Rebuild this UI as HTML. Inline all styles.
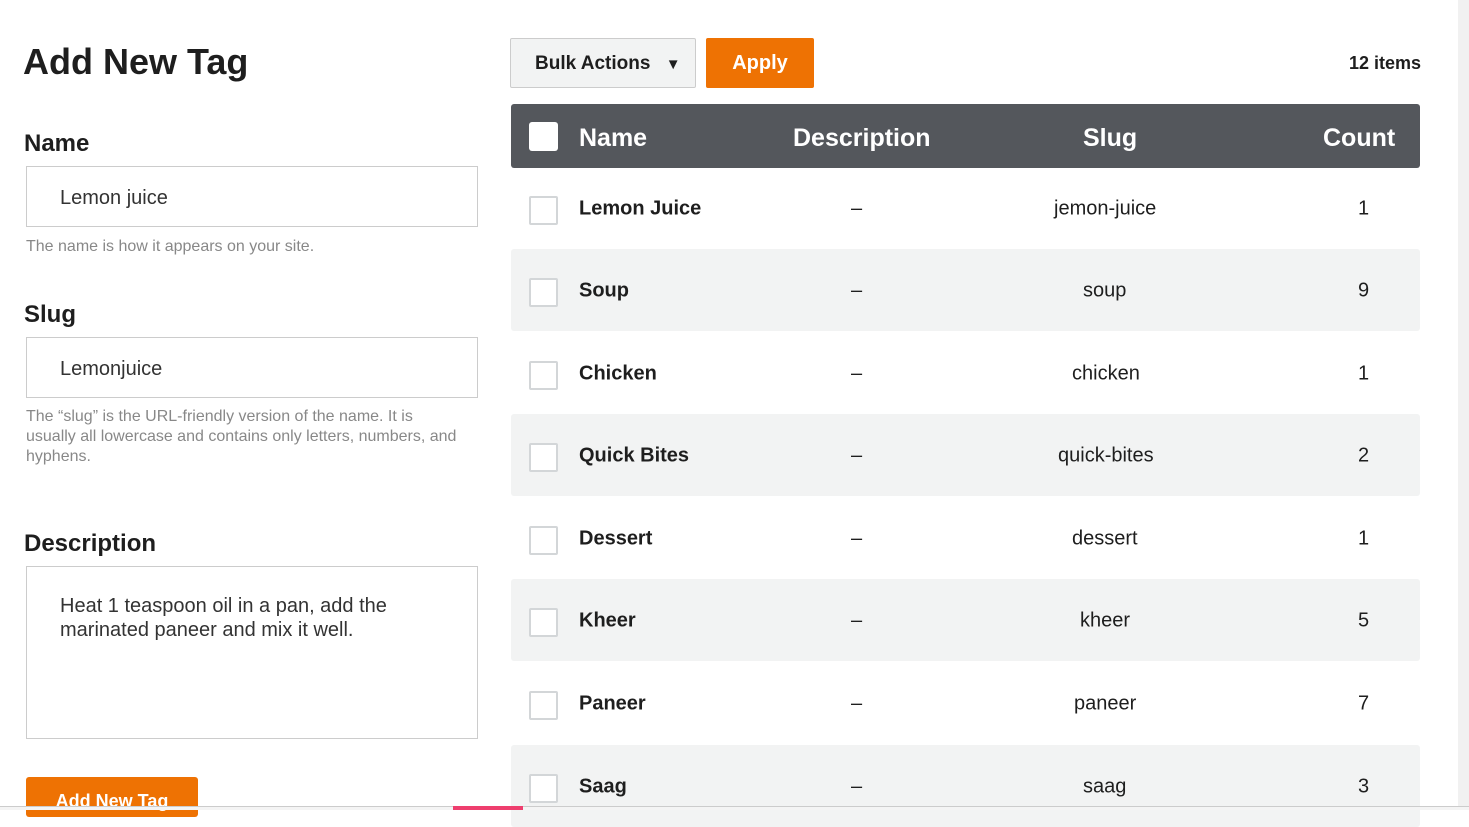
<!DOCTYPE html>
<html><head><style>
*{box-sizing:border-box;margin:0;padding:0}
body{width:1469px;height:810px;overflow:hidden;background:#fff;font-family:"Liberation Sans",Arial,sans-serif;color:#1e1e1e;position:relative}
.a{position:absolute}
h1{position:absolute;left:23px;top:41px;font-size:36px;font-weight:bold}
.lbl{position:absolute;left:24px;font-size:24px;font-weight:bold}
.inp{position:absolute;left:26px;width:452px;border:1px solid #ccc;background:#fff;font-size:20px;color:#333;padding:0 33px}
.help{position:absolute;left:26px;width:432px;font-size:16px;color:#888;line-height:20px}
.row{position:absolute;left:511px;width:909px;height:82px;font-size:20px}
.row.s{background:#f2f3f3;border-radius:3px}
.row span{position:absolute;top:50%;transform:translateY(-45%)}
.cb{position:absolute;left:18px;top:50%;margin-top:-12px;width:29px;height:29px;border:2px solid #d3d6d8;border-radius:2px;background:#fff}
</style></head><body>
<div class="a" style="right:0;top:0;width:11px;height:810px;background:#f1f1f1"></div>
<h1>Add New Tag</h1>
<div class="lbl" style="top:130px">Name</div>
<div class="inp" style="top:166px;height:61px;line-height:62px">Lemon juice</div>
<div class="help" style="top:237px">The name is how it appears on your site.</div>
<div class="lbl" style="top:301px">Slug</div>
<div class="inp" style="top:337px;height:61px;line-height:62px">Lemonjuice</div>
<div class="help" style="top:407px">The “slug” is the URL-friendly version of the name. It is usually all lowercase and contains only letters, numbers, and hyphens.</div>
<div class="lbl" style="top:530px">Description</div>
<div class="inp" style="top:566px;height:173px;padding-top:27px;line-height:24px">Heat 1 teaspoon oil in a pan, add the marinated paneer and mix it well.</div>
<div class="a" style="left:26px;top:777px;width:172px;height:40px;background:#ee7203;border-radius:3px;color:#fff;font-weight:bold;font-size:18px;text-align:center;line-height:48px">Add New Tag</div>

<div class="a" style="left:510px;top:38px;width:186px;height:50px;background:#f2f3f3;border:1px solid #ccc;border-radius:2px;font-size:19px;font-weight:bold;line-height:49px;padding-left:24px">Bulk Actions <span style="font-size:15px;margin-left:10px">▼</span></div>
<div class="a" style="left:706px;top:38px;width:108px;height:50px;background:#ee7203;border-radius:2px;color:#fff;font-size:20px;font-weight:bold;text-align:center;line-height:51px">Apply</div>
<div class="a" style="left:1300px;top:53px;width:121px;text-align:right;font-size:18px;font-weight:bold">12 items</div>

<div class="a" style="left:511px;top:104px;width:909px;height:64px;background:#54575c;border-radius:3px;color:#fff;font-size:25px;font-weight:bold">
<div class="a" style="left:18px;top:18px;width:29px;height:29px;background:#fff;border-radius:3px"></div>
<span class="a" style="left:68px;top:20px">Name</span>
<span class="a" style="left:282px;top:20px">Description</span>
<span class="a" style="left:572px;top:20px">Slug</span>
<span class="a" style="left:812px;top:20px">Count</span>
</div>

<div class="row" style="top:167px"><div class="cb"></div><span style="left:68px;font-weight:bold">Lemon Juice</span><span style="left:340px">–</span><span style="left:543px">jemon-juice</span><span style="left:847px">1</span></div>
<div class="row s" style="top:249px"><div class="cb"></div><span style="left:68px;font-weight:bold">Soup</span><span style="left:340px">–</span><span style="left:572px">soup</span><span style="left:847px">9</span></div>
<div class="row" style="top:332px"><div class="cb"></div><span style="left:68px;font-weight:bold">Chicken</span><span style="left:340px">–</span><span style="left:561px">chicken</span><span style="left:847px">1</span></div>
<div class="row s" style="top:414px"><div class="cb"></div><span style="left:68px;font-weight:bold">Quick Bites</span><span style="left:340px">–</span><span style="left:547px">quick-bites</span><span style="left:847px">2</span></div>
<div class="row" style="top:497px"><div class="cb"></div><span style="left:68px;font-weight:bold">Dessert</span><span style="left:340px">–</span><span style="left:561px">dessert</span><span style="left:847px">1</span></div>
<div class="row s" style="top:579px"><div class="cb"></div><span style="left:68px;font-weight:bold">Kheer</span><span style="left:340px">–</span><span style="left:569px">kheer</span><span style="left:847px">5</span></div>
<div class="row" style="top:662px"><div class="cb"></div><span style="left:68px;font-weight:bold">Paneer</span><span style="left:340px">–</span><span style="left:563px">paneer</span><span style="left:847px">7</span></div>
<div class="row s" style="top:745px"><div class="cb"></div><span style="left:68px;font-weight:bold">Saag</span><span style="left:340px">–</span><span style="left:572px">saag</span><span style="left:847px">3</span></div>

<div class="a" style="left:0;top:806px;width:1469px;height:4px;background:#f4f4f4;border-top:1px solid #ccc"></div>
<div class="a" style="left:453px;top:806px;width:70px;height:4px;background:#ee3e6e"></div>
</body></html>
